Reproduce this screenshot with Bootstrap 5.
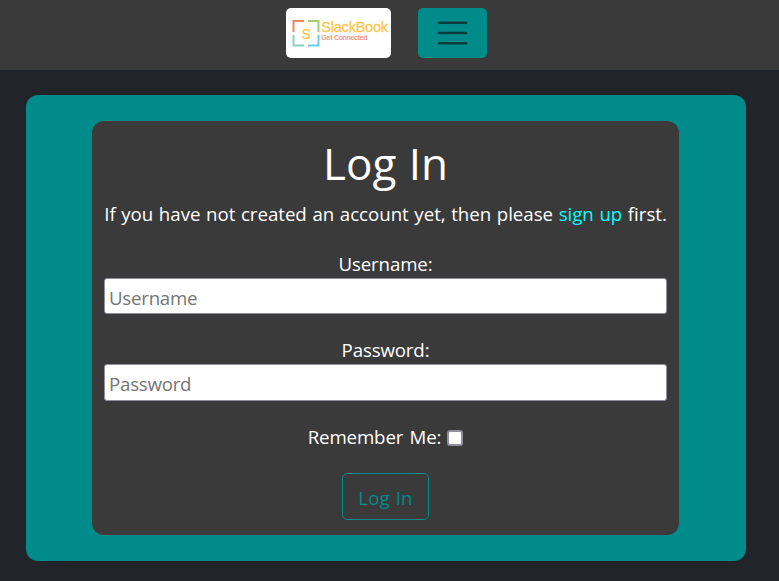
<!DOCTYPE html>
<html lang="en">
<head>
<meta charset="utf-8">
<meta name="viewport" content="width=device-width, initial-scale=1">
<title>SlackBook - Log In</title>
<link href="https://cdn.jsdelivr.net/npm/bootstrap@5.3.0/dist/css/bootstrap.min.css" rel="stylesheet">
<style>
  body { background: #212529; color: #fff; font-family: "Segoe UI", "Open Sans", "Noto Sans", sans-serif; font-size: 18.7px; line-height: 29px; letter-spacing: -.14px; overflow: hidden; }
  .site-bar { height: 70px; background: #3a3a3a; gap: 27px; padding: 8px 6px 0 0; }
  .brand-box { width: 105px; height: 50px; border-radius: 5px; }
  .menu-btn { width: 69px; height: 50px; background: #008b8b; border-radius: 5px; }
  .outer-panel { margin: 25px 33px 0 26px; height: 466px; padding: 26px 67px 26px 66px; background: #008b8b; border-radius: 12px; }
  .login-panel { height: 414px; padding: 12px; background: #3a3a3a; border-radius: 12px; }
  .login-panel h1 { font-size: 44px; line-height: 60px; margin-bottom: 6px; font-weight: 400; letter-spacing: 0; word-spacing: 1px; }
  .login-panel p { margin-bottom: 21px; letter-spacing: -.03px; word-spacing: .8px; }
  .signup { color: #0ff; }
  .field { height: 36px; padding: 3px 4px 1px; border: 1px solid #8f8f9d; border-radius: 3px; color: #212529; line-height: 29px; letter-spacing: -.25px; }
  .field::placeholder { color: #757575; }
  .field-lower { height: 37px; padding-top: 2px; }
  .form-step { margin-top: 21px; }
  .label-lower { margin-top: 22px; line-height: 28px; }
  .remember-row { word-spacing: 1.5px; }
  .check { appearance: none; width: 16px; height: 16px; border: 2px solid #8f8f9d; border-radius: 3px; background: #fff; margin: 2px 0 0 6px; }
  .login-btn { margin-top: 22px; width: 87px; height: 47px; border: 1px solid #008b8b; border-radius: 5px; color: #008b8b; font-size: 18.7px; padding: 3px 0 0; letter-spacing: .1px; word-spacing: 1px; }
</style>
</head>
<body>
<nav class="site-bar d-flex justify-content-center align-items-start">
  <a class="brand-box bg-white d-block" href="#" aria-label="SlackBook">
    <svg class="d-block" width="105" height="50" viewBox="0 0 105 50" font-family="Liberation Sans, Arial, sans-serif">
      <g fill="none" stroke-width="2">
        <path stroke="#ed8765" d="M7.5 24V13H18"/>
        <path stroke="#a6cf72" d="M22 13H32.5V24"/>
        <path stroke="#8bd1bd" d="M7.5 27V37.5H18"/>
        <path stroke="#6bcbea" d="M22 37.5H32.5V27"/>
      </g>
      <g fill="#fbc64d" stroke="#fbc64d" stroke-width=".3">
        <text x="15.5" y="30.5" font-size="15.5" textLength="9" lengthAdjust="spacingAndGlyphs">S</text>
        <text x="35.3" y="23.7" font-size="14.5" textLength="66.5" lengthAdjust="spacingAndGlyphs">SlackBook</text>
      </g>
      <text x="35.2" y="32" fill="#f58972" stroke="#f58972" stroke-width=".15" font-size="6.6" textLength="46" lengthAdjust="spacingAndGlyphs">Get Connected</text>
    </svg>
  </a>
  <button class="menu-btn btn border-0 p-0 d-flex justify-content-center align-items-center" type="button" aria-label="Menu">
    <svg width="36" height="36" viewBox="0 0 36 36" fill="none" stroke="#0a3d3e" stroke-width="2.4" stroke-linecap="round"><path d="M4.1 7.8H31.1M4.1 18H31.1M4.1 28.2H31.1"/></svg>
  </button>
</nav>
<main class="outer-panel">
  <form class="login-panel text-center">
    <h1>Log In</h1>
    <p class="text-nowrap">If you have not created an account yet, then please <a class="signup text-decoration-none" href="#">sign up</a> first.</p>
    <label class="d-block" for="user">Username:</label>
    <input class="field d-block w-100" id="user" type="text" placeholder="Username">
    <label class="label-lower d-block" for="pass">Password:</label>
    <input class="field field-lower d-block w-100" id="pass" type="password" placeholder="Password">
    <div class="form-step remember-row d-flex justify-content-center align-items-center">
      <label for="remember">Remember Me:</label><input class="check" id="remember" type="checkbox">
    </div>
    <button class="login-btn btn" type="button">Log In</button>
  </form>
</main>
<script src="https://cdn.jsdelivr.net/npm/bootstrap@5.3.0/dist/js/bootstrap.bundle.min.js"></script>
</body>
</html>
